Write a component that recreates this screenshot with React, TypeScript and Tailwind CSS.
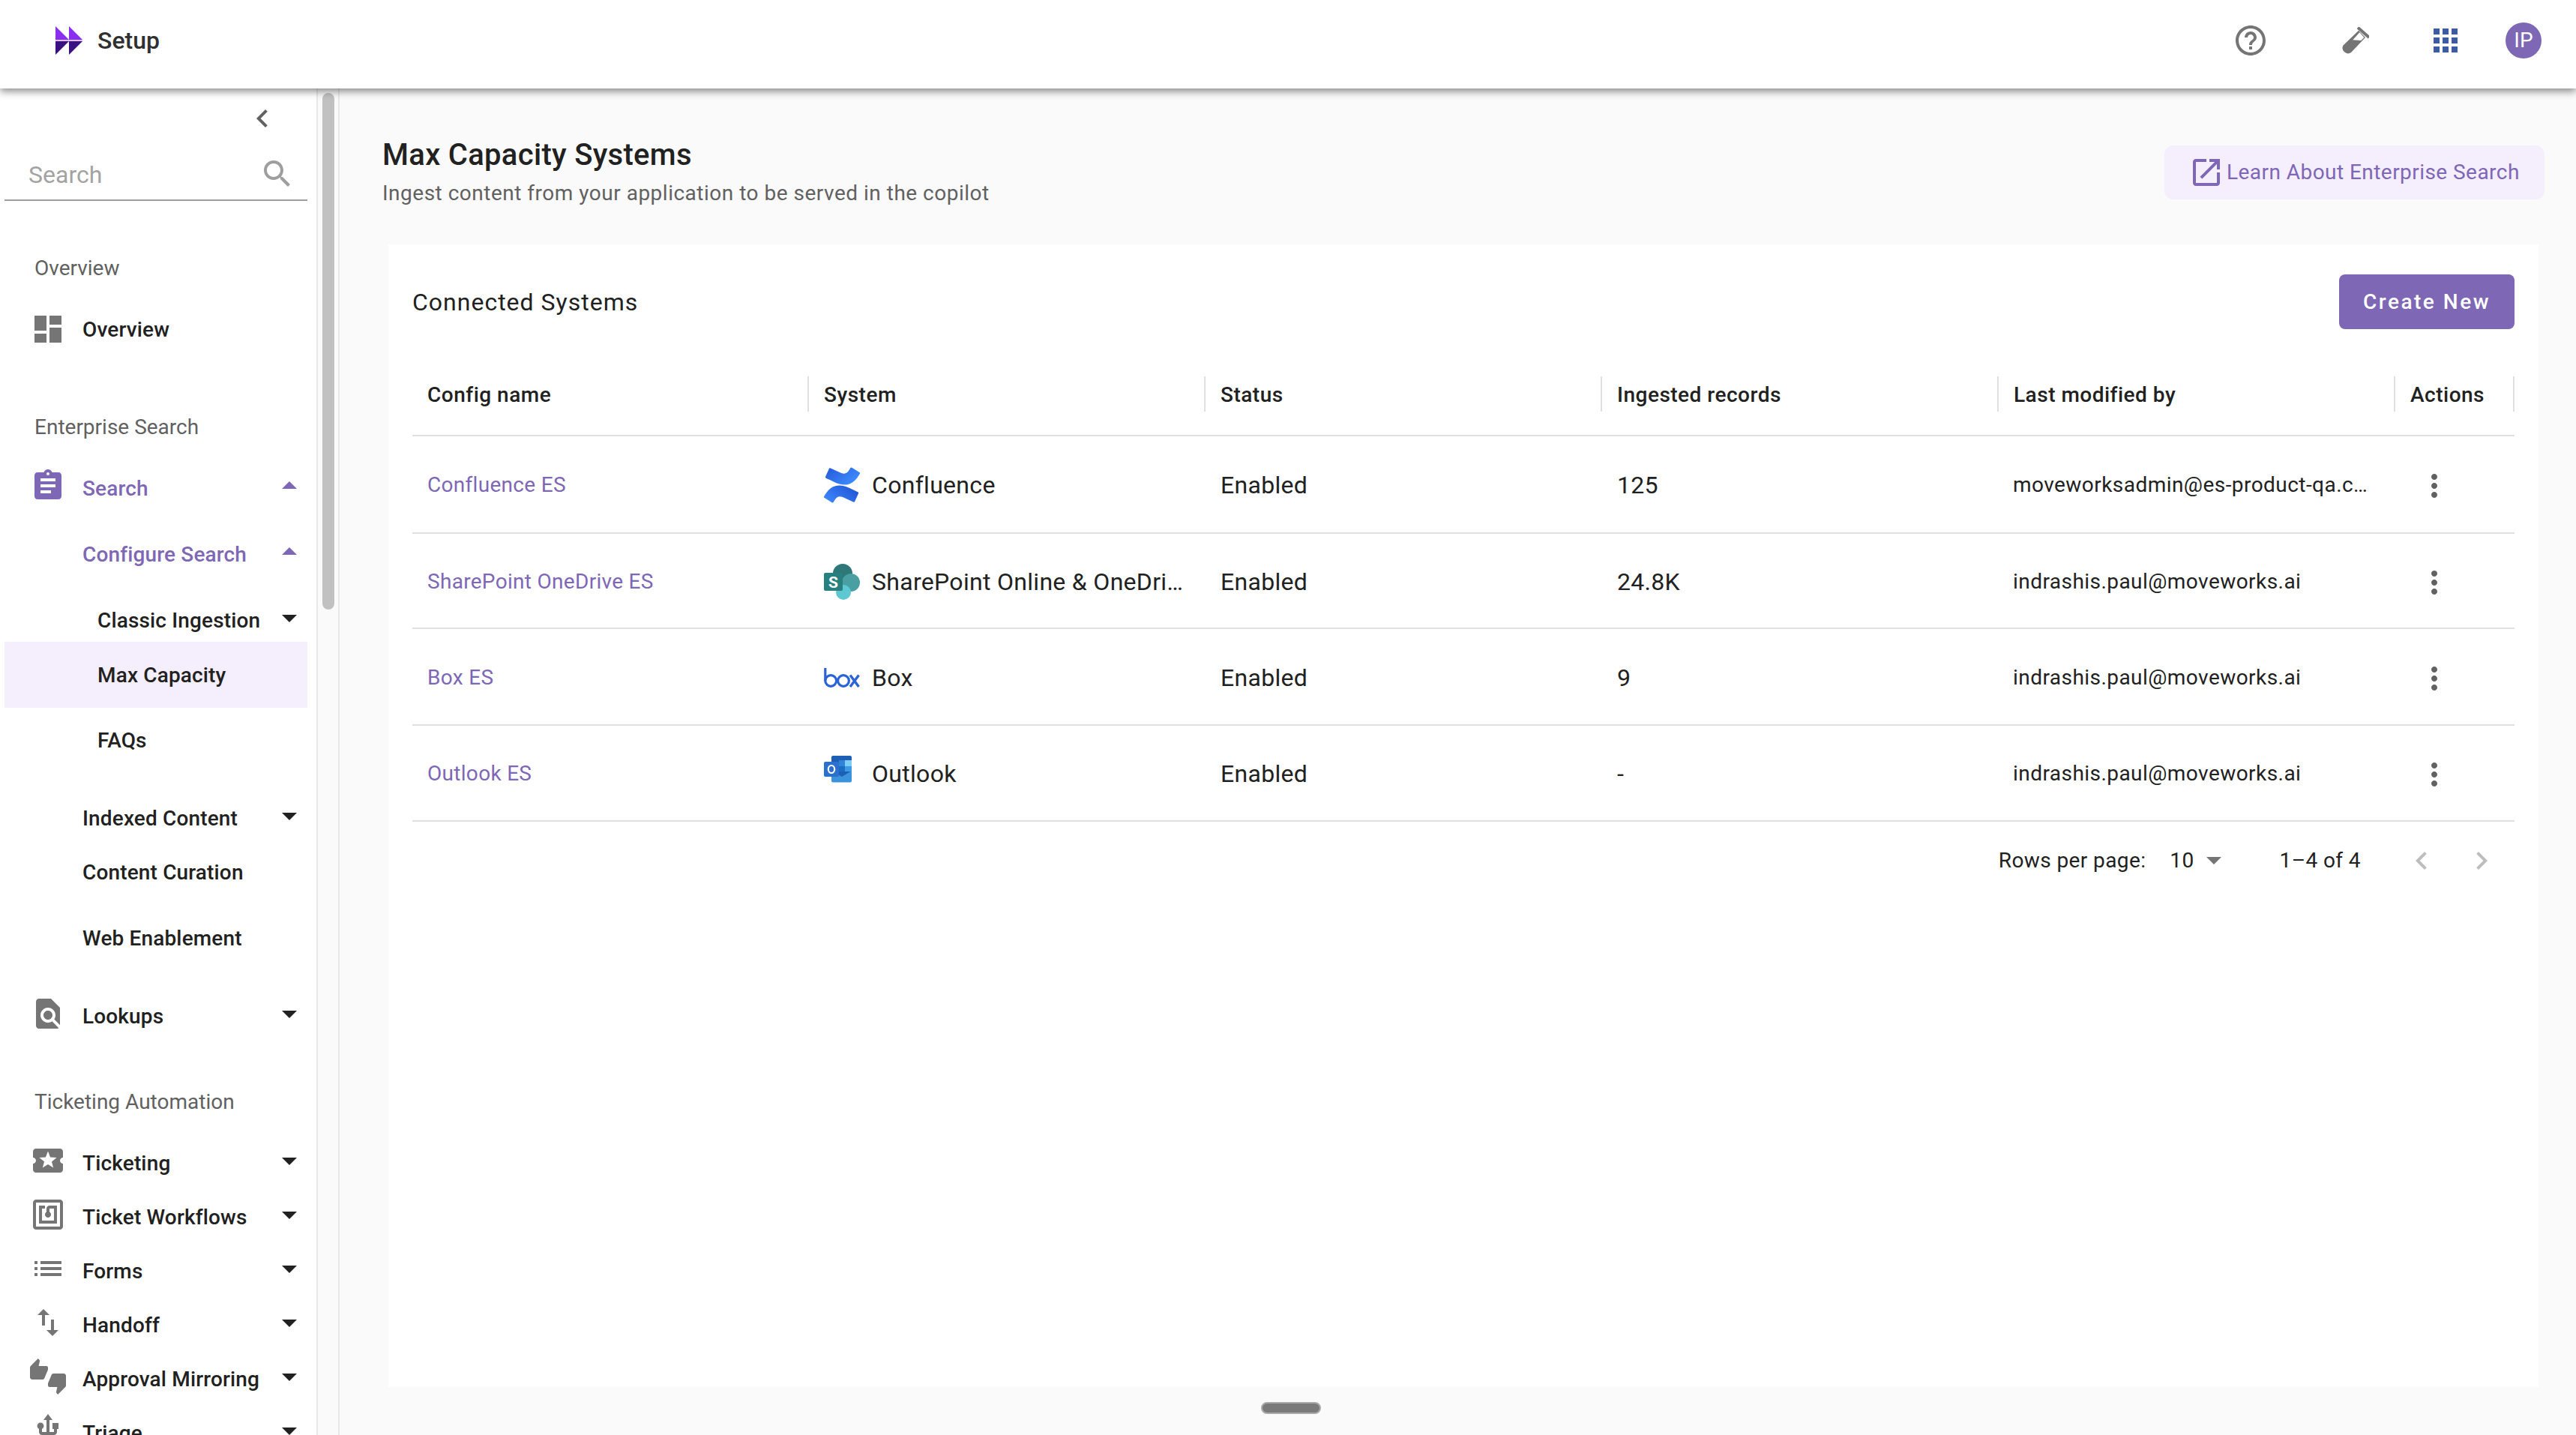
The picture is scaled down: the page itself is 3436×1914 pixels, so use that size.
const PURPLE = "#7e67b5";

const ICONS = {
  dashboard: "M3 13h8V3H3v10zm0 8h8v-6H3v6zm10 0h8V11h-8v10zm0-18v6h8V3h-8z",
  assignment:
    "M19 3h-4.18C14.4 1.84 13.3 1 12 1c-1.3 0-2.4.84-2.82 2H5c-1.1 0-2 .9-2 2v14c0 1.1.9 2 2 2h14c1.1 0 2-.9 2-2V5c0-1.1-.9-2-2-2zm-7 0c.55 0 1 .45 1 1s-.45 1-1 1-1-.45-1-1 .45-1 1-1zm2 14H7v-2h7v2zm3-4H7v-2h10v2zm0-4H7V7h10v2z",
  findInPage:
    "M20 19.59V8l-6-6H6c-1.1 0-1.99.9-1.99 2L4 20c0 1.1.89 2 1.99 2H18c.45 0 .85-.15 1.19-.4l-4.43-4.43c-.8.52-1.74.83-2.76.83-2.76 0-5-2.24-5-5s2.24-5 5-5 5 2.24 5 5c0 1.02-.31 1.96-.83 2.75L20 19.59zM9 13c0 1.66 1.34 3 3 3s3-1.34 3-3-1.34-3-3-3-3 1.34-3 3z",
  ticket:
    "M20 12c0-1.1.9-2 2-2V6c0-1.1-.9-2-2-2H4c-1.1 0-1.99.9-1.99 2v4c1.1 0 1.99.9 1.99 2s-.89 2-2 2v4c0 1.1.9 2 2 2h16c1.1 0 2-.9 2-2v-4c-1.1 0-2-.9-2-2zm-4.42 4.8L12 14.5l-3.58 2.3 1.08-4.12-3.29-2.69 4.24-.25L12 5.8l1.54 3.95 4.24.25-3.29 2.69 1.09 4.11z",
  nfc: "M20 2H4c-1.1 0-2 .9-2 2v16c0 1.1.9 2 2 2h16c1.1 0 2-.9 2-2V4c0-1.1-.9-2-2-2zm0 18H4V4h16v16zM18 6h-5c-1.1 0-2 .9-2 2v2.28c-.6.35-1 .98-1 1.72 0 1.1.9 2 2 2s2-.9 2-2c0-.74-.4-1.38-1-1.72V8h3v8H8V8h2V6H6v12h12V6z",
  list: "M3 13h2v-2H3v2zm0 4h2v-2H3v2zm0-8h2V7H3v2zm4 4h14v-2H7v2zm0 4h14v-2H7v2zM7 7v2h14V7H7z",
  swap: "M16 17.01V10h-2v7.01h-3L15 21l4-3.99h-3zM9 3L5 6.99h3V14h2V6.99h3L9 3z",
  thumbs:
    "M12 6c0-.55-.45-1-1-1H5.82l.66-3.18.02-.23c0-.31-.13-.59-.33-.8L5.38 0 .44 4.94C.17 5.21 0 5.59 0 6v6.5c0 .83.67 1.5 1.5 1.5h6.75c.62 0 1.15-.38 1.38-.91l2.26-5.29c.07-.17.11-.36.11-.55V6zm10.5 4h-6.75c-.62 0-1.15.38-1.38.91l-2.26 5.29c-.07.17-.11.36-.11.55V18c0 .55.45 1 1 1h5.18l-.66 3.18-.02.24c0 .31.13.59.33.8l.79.78 4.94-4.94c.27-.27.44-.65.44-1.06v-6.5c0-.83-.67-1.5-1.5-1.5z",
  usb: "M15 7v4h1v2h-3V5h2l-3-4-3 4h2v8H8v-2.07c.7-.37 1.2-1.08 1.2-1.93 0-1.21-.99-2.2-2.2-2.2-1.21 0-2.2.99-2.2 2.2 0 .85.5 1.56 1.2 1.93V13c0 1.11.89 2 2 2h3v3.05c-.71.37-1.2 1.1-1.2 1.95 0 1.22.99 2.2 2.2 2.2 1.21 0 2.2-.98 2.2-2.2 0-.85-.49-1.58-1.2-1.95V15h3c1.11 0 2-.89 2-2v-2h1V7h-4z",
  help: "M11 18h2v-2h-2v2zm1-16C6.48 2 2 6.48 2 12s4.48 10 10 10 10-4.48 10-10S17.52 2 12 2zm0 18c-4.41 0-8-3.59-8-8s3.59-8 8-8 8 3.59 8 8-3.59 8-8 8zm0-14c-2.21 0-4 1.79-4 4h2c0-1.1.9-2 2-2s2 .9 2 2c0 2-3 1.75-3 5h2c0-2.25 3-2.5 3-5 0-2.21-1.79-4-4-4z",
  apps: "M4 8h4V4H4v4zm6 12h4v-4h-4v4zm-6 0h4v-4H4v4zm0-6h4v-4H4v4zm6 0h4v-4h-4v4zm6-10v4h4V4h-4zm-6 4h4V4h-4v4zm6 6h4v-4h-4v4zm0 6h4v-4h-4v4z",
  openNew:
    "M19 19H5V5h7V3H5c-1.11 0-2 .9-2 2v14c0 1.1.89 2 2 2h14c1.1 0 2-.9 2-2v-7h-2v7zM14 3v2h3.59l-9.83 9.83 1.41 1.41L19 6.41V10h2V3h-7z",
  search:
    "M15.5 14h-.79l-.28-.27C15.41 12.59 16 11.11 16 9.5 16 5.91 13.09 3 9.5 3S3 5.91 3 9.5 5.91 16 9.5 16c1.61 0 3.09-.59 4.23-1.57l.27.28v.79l5 4.99L20.49 19l-4.99-5zm-6 0C7.01 14 5 11.99 5 9.5S7.01 5 9.5 5 14 7.01 14 9.5 11.99 14 9.5 14z",
  chevronLeft: "M15.41 7.41L14 6l-6 6 6 6 1.41-1.41L10.83 12z",
  chevronRight: "M10 6L8.59 7.41 13.17 12l-4.58 4.59L10 18l6-6z",
  caretDown: "M7 10l5 5 5-5z",
  caretUp: "M7 14l5-5 5 5z",
  dots: "M12 8c1.1 0 2-.9 2-2s-.9-2-2-2-2 .9-2 2 .9 2 2 2zm0 2c-1.1 0-2 .9-2 2s.9 2 2 2 2-.9 2-2-.9-2-2-2zm0 6c-1.1 0-2 .9-2 2s.9 2 2 2 2-.9 2-2-.9-2-2-2z",
};

function Icon({ d, color, className = "" }: { d: string; color: string; className?: string }) {
  return (
    <svg viewBox="0 0 24 24" fill={color} className={`w-[48px] h-[48px] shrink-0 ${className}`}>
      <path d={d} />
    </svg>
  );
}

type NavEntry =
  | { kind: "section"; label: string; top: string }
  | {
      kind: "item";
      label: string;
      top: string;
      icon?: string;
      indent?: string;
      height?: string;
      active?: boolean;
      selected?: boolean;
      arrow?: "up" | "down";
      lift?: string;
    };

const NAV: NavEntry[] = [
  { kind: "section", label: "Overview", top: "mt-[69px]" },
  { kind: "item", label: "Overview", top: "mt-[26px]", icon: ICONS.dashboard, lift: "" },
  { kind: "section", label: "Enterprise Search", top: "mt-[74px]" },
  { kind: "item", label: "Search", top: "mt-[26px]", icon: ICONS.assignment, active: true, arrow: "up" },
  { kind: "item", label: "Configure Search", top: "mt-[16px]", indent: "pl-[104px]", active: true, arrow: "up" },
  { kind: "item", label: "Classic Ingestion", top: "mt-[24px]", indent: "pl-[124px]", height: "h-[56px]", arrow: "down" },
  { kind: "item", label: "Max Capacity", top: "mt-[1px]", indent: "pl-[124px]", height: "h-[88px]", selected: true },
  { kind: "item", label: "FAQs", top: "mt-[7px]", indent: "pl-[124px]" },
  { kind: "item", label: "Indexed Content", top: "mt-[32px]", indent: "pl-[104px]", arrow: "down" },
  { kind: "item", label: "Content Curation", top: "mt-0", indent: "pl-[104px]" },
  { kind: "item", label: "Web Enablement", top: "mt-[16px]", indent: "pl-[104px]" },
  { kind: "item", label: "Lookups", top: "mt-[32px]", icon: ICONS.findInPage, arrow: "down" },
  { kind: "section", label: "Ticketing Automation", top: "mt-[58px]" },
  { kind: "item", label: "Ticketing", top: "mt-[26px]", icon: ICONS.ticket, arrow: "down" },
  { kind: "item", label: "Ticket Workflows", top: "mt-0", icon: ICONS.nfc, arrow: "down" },
  { kind: "item", label: "Forms", top: "mt-0", icon: ICONS.list, arrow: "down" },
  { kind: "item", label: "Handoff", top: "mt-0", icon: ICONS.swap, arrow: "down" },
  { kind: "item", label: "Approval Mirroring", top: "mt-0", icon: ICONS.thumbs, arrow: "down" },
  { kind: "item", label: "Triage", top: "mt-0", icon: ICONS.usb, arrow: "down" },
];

function NavItem({ entry }: { entry: Extract<NavEntry, { kind: "item" }> }) {
  const tint = entry.active ? PURPLE : "#212121";
  return (
    <div
      className={`${entry.top} ${entry.height ?? "h-[72px]"} ${entry.selected ? "bg-[#f4eefd]" : ""} ${
        entry.indent ?? "pl-[34px]"
      } shrink-0 ml-[6px] w-[404px] flex items-center text-[28px] leading-[36px] font-medium tracking-[0.15px]`}
      style={{ color: tint }}
    >
      {entry.icon && (
        <Icon
          d={entry.icon}
          color={entry.active ? PURPLE : "#757575"}
          className={`mr-[22px] ${entry.lift ?? "-mt-[6px]"}`}
        />
      )}
      <span className="flex-1 pt-[2px] whitespace-nowrap">{entry.label}</span>
      {entry.arrow && (
        <Icon d={entry.arrow === "up" ? ICONS.caretUp : ICONS.caretDown} color={tint} className="-mt-[6px]" />
      )}
    </div>
  );
}

function Sidebar() {
  return (
    <div className="flex h-full shrink-0">
      <aside className="w-[422px] h-full overflow-hidden bg-white flex flex-col">
        <div className="mt-[8px] h-[64px] shrink-0 flex pl-[326px] items-center">
          <Icon d={ICONS.chevronLeft} color="#616161" />
        </div>
        <div className="ml-[6px] w-[404px] h-[78px] shrink-0 pt-[8px] border-b-2 border-[#9e9e9e] flex items-center pl-[32px]">
          <span className="flex-1 pt-[2px] text-[32px] text-[#a3a3a3]">Search</span>
          <Icon d={ICONS.search} color="#9e9e9e" className="mr-[16px]" />
        </div>
        {NAV.map((entry) =>
          entry.kind === "section" ? (
            <div
              key={entry.label + "-section"}
              className={`${entry.top} h-[40px] shrink-0 pl-[46px] pt-[2px] flex items-center text-[28px] text-[#616161]`}
            >
              {entry.label}
            </div>
          ) : (
            <NavItem key={entry.label} entry={entry} />
          )
        )}
      </aside>
      <div className="w-[31px] h-full bg-[#fafafa] border-x-2 border-[#e8e8e8] pl-[6px] pt-[6px]">
        <div className="w-[16px] h-[689px] rounded-full bg-[#c1c1c1]" />
      </div>
    </div>
  );
}

function LogoMark() {
  return (
    <svg viewBox="0 0 36 38" className="w-[36px] h-[38px]">
      <path d="M0 0L18 18H0z M18 0L36 18H18z" fill="#8a2ff0" />
      <path d="M0 18H36V20H0z" fill="#d9c4fb" />
      <path d="M0 38L18 20H0z M18 38L36 20H18z" fill="#3b1082" />
    </svg>
  );
}

function TestTube() {
  return (
    <svg viewBox="0 0 36 36" className="w-[36px] h-[36px]">
      <path d="M22 4.7L31 14L12 34A7.3 7.3 0 0 1 1.5 24.5z" fill="#757575" />
      <path d="M21 .7L36 14" stroke="#757575" strokeWidth="4" fill="none" />
      <path d="M14.3 17.3L23.3 7.3L29.3 14L25.3 18z" fill="#ffffff" />
    </svg>
  );
}

function ConfluenceLogo() {
  return (
    <svg viewBox="0 0 24 24" className="w-[48px] h-[48px]">
      <defs>
        <linearGradient id="cfA" x1="0" y1="1" x2="1" y2="0.4">
          <stop offset="0" stopColor="#3f8cff" />
          <stop offset="1" stopColor="#2358d8" />
        </linearGradient>
        <linearGradient id="cfB" x1="0" y1="0" x2="1" y2="0.6">
          <stop offset="0" stopColor="#2358d8" />
          <stop offset="1" stopColor="#3f8cff" />
        </linearGradient>
      </defs>
      <path
        fill="url(#cfA)"
        d="M.87 18.257c-.248.382-.53.875-.763 1.245a.764.764 0 0 0 .255 1.04l4.965 3.054a.764.764 0 0 0 1.058-.26c.199-.332.454-.763.733-1.221 1.967-3.247 3.945-2.853 7.508-1.146l4.957 2.337a.764.764 0 0 0 1.028-.382l2.364-5.346a.764.764 0 0 0-.382-1 599.851 599.851 0 0 1-4.965-2.361C10.911 10.97 5.224 11.185.87 18.257z"
      />
      <path
        fill="url(#cfB)"
        d="M23.131 5.743c.249-.405.531-.875.764-1.25a.764.764 0 0 0-.256-1.034L18.675.404a.764.764 0 0 0-1.058.26c-.195.335-.451.763-.734 1.225-1.966 3.246-3.945 2.85-7.508 1.146L4.437.694a.764.764 0 0 0-1.027.382L1.046 6.422a.764.764 0 0 0 .382 1c1.039.49 3.105 1.467 4.965 2.361 6.698 3.246 12.384 3.029 16.738-4.04z"
      />
    </svg>
  );
}

function SharePointLogo() {
  return (
    <svg viewBox="0 0 48 48" className="w-[48px] h-[48px]">
      <circle cx="25" cy="13" r="13" fill="#2f7878" />
      <circle cx="36" cy="25" r="12" fill="#4a9fa3" />
      <circle cx="26" cy="38" r="10" fill="#5ec8d2" />
      <rect x="0" y="12" width="25" height="24" rx="2" fill="#27807f" />
      <text x="12.5" y="31.5" textAnchor="middle" fontSize="21" fontWeight="700" fill="#ffffff" fontFamily="Roboto, sans-serif">
        S
      </text>
    </svg>
  );
}

function BoxLogo() {
  return (
    <svg viewBox="0 0 48 26" className="w-[48px] h-[26px]" fill="none" stroke="#2a62d8" strokeWidth="3.2">
      <path d="M1.8 0V17" />
      <circle cx="9.2" cy="17" r="7.4" />
      <circle cx="26" cy="17" r="7.4" />
      <path d="M35 9.5L46.5 25M46.5 9.5L35 25" strokeWidth="3.4" />
    </svg>
  );
}

function OutlookLogo() {
  return (
    <svg viewBox="0 0 38 36" className="w-[38px] h-[36px]">
      <rect x="10" y="0" width="27" height="30" rx="2" fill="#1c5fb5" />
      <rect x="20" y="6" width="8" height="8" fill="#2f83d8" />
      <rect x="28" y="6" width="9" height="8" fill="#7dcdf5" />
      <rect x="20" y="14" width="8" height="7" fill="#1d6cc4" />
      <rect x="28" y="14" width="9" height="7" fill="#3d9be6" />
      <path d="M10 20L24 28L37 20V33.5a2 2 0 0 1-2 2H12a2 2 0 0 1-2-2z" fill="#3c93dd" />
      <rect x="0" y="8" width="20" height="20" rx="2" fill="#2a70cc" />
      <ellipse cx="10" cy="18" rx="4.2" ry="5" fill="none" stroke="#ffffff" strokeWidth="2.2" />
    </svg>
  );
}

const COLUMNS = ["Config name", "System", "Status", "Ingested records", "Last modified by", "Actions"];

const ROWS = [
  {
    name: "Confluence ES",
    system: "Confluence",
    logo: <ConfluenceLogo />,
    records: "125",
    email: "moveworksadmin@es-product-qa.com",
    height: "h-[130px]",
  },
  {
    name: "SharePoint OneDrive ES",
    system: "SharePoint Online & OneDrive",
    logo: <SharePointLogo />,
    records: "24.8K",
    email: "indrashis.paul@moveworks.ai",
    height: "h-[127px]",
  },
  {
    name: "Box ES",
    system: "Box",
    logo: <BoxLogo />,
    records: "9",
    email: "indrashis.paul@moveworks.ai",
    height: "h-[129px]",
  },
  {
    name: "Outlook ES",
    system: "Outlook",
    logo: (
      <span className="-mt-[12px]">
        <OutlookLogo />
      </span>
    ),
    records: "-",
    email: "indrashis.paul@moveworks.ai",
    height: "h-[128px]",
  },
];

const GRID = "grid grid-cols-[529px_529px_529px_529px_529px_159px]";

function SystemsTable() {
  return (
    <div className="mt-[32px]">
      <div className={`${GRID} h-[111px] border-b-2 border-[#e0e0e0]`}>
        {COLUMNS.map((col) => (
          <div key={col} className="flex items-center">
            <span className="flex-1 pl-[20px] pt-[2px] text-[28px] font-medium tracking-[0.5px] text-[#212121]">{col}</span>
            <span className="w-[2px] h-[47px] bg-[#e0e0e0]" />
          </div>
        ))}
      </div>
      {ROWS.map((row) => (
        <div key={row.name} className={`${GRID} ${row.height} pt-[2px] border-b-2 border-[#e0e0e0] items-center text-[#212121]`}>
          <a className="pl-[20px] text-[28px] tracking-[0.3px] text-[#7e67b5]">{row.name}</a>
          <div className="pl-[20px] flex items-center">
            <span className="w-[48px] flex justify-start shrink-0">{row.logo}</span>
            <span className="ml-[16px] w-[424px] truncate text-[32px] tracking-[0.3px]">{row.system}</span>
          </div>
          <span className="pl-[20px] text-[32px] tracking-[0.3px]">Enabled</span>
          <span className="pl-[20px] text-[32px] tracking-[0.3px]">{row.records}</span>
          <span className="pl-[19px] max-w-[493px] truncate text-[28px] tracking-[0.45px]">{row.email}</span>
          <div className="pl-[28px] pt-[2px]">
            <Icon d={ICONS.dots} color="#616161" />
          </div>
        </div>
      ))}
      <div className="h-[102px] pt-[2px] flex items-center justify-end pr-[20px] text-[28px] tracking-[0.4px] text-[#212121]">
        <span>Rows per page:</span>
        <span className="ml-[32px]">10</span>
        <Icon d={ICONS.caretDown} color="#757575" className="ml-[2px] -mt-[2px]" />
        <span className="ml-[64px]">1–4 of 4</span>
        <Icon d={ICONS.chevronLeft} color="#bdbdbd" className="ml-[57px]" />
        <Icon d={ICONS.chevronRight} color="#bdbdbd" className="ml-[32px]" />
      </div>
    </div>
  );
}

function App() {
  return (
    <div className="relative h-[1914px] w-[3436px] overflow-hidden flex flex-col bg-[#fafafa] [font-family:Roboto,sans-serif]">
      <header className="relative z-10 h-[118px] shrink-0 bg-white shadow-[0_4px_10px_rgba(0,0,0,0.45)] flex items-center pb-[10px] pl-[74px] pr-[46px]">
        <LogoMark />
        <span className="ml-[20px] flex-1 text-[32px] font-medium text-[#303030]">Setup</span>
        <Icon d={ICONS.help} color="#757575" />
        <span className="ml-[98px] w-[36px] h-[36px]">
          <TestTube />
        </span>
        <Icon d={ICONS.apps} color="#3c5ba0" className="ml-[78px]" />
        <div className="ml-[56px] w-[48px] h-[48px] rounded-full bg-[#7e67b5] text-white text-[28px] flex items-center justify-center">
          IP
        </div>
      </header>

      <div className="flex-1 min-h-0 flex">
        <Sidebar />
        <main className="flex-1 min-w-0 flex flex-col pl-[57px] pr-[42px] pb-[64px]">
          <div className="h-[208px] shrink-0 flex justify-between items-start">
            <div className="pt-[60px]">
              <h1 className="h-[54px] pt-[4px] flex items-center text-[40px] font-medium tracking-[0.3px] text-[#212121]">
                Max Capacity Systems
              </h1>
              <p className="mt-[6px] h-[40px] flex items-center text-[28px] tracking-[0.5px] text-[#616161]">
                Ingest content from your application to be served in the copilot
              </p>
            </div>
            <button className="mt-[76px] w-[507px] h-[72px] rounded-[12px] bg-[#f4eefd] flex items-center pl-[32px] text-[28px] tracking-[0.45px] text-[#7e67b5]">
              <Icon d={ICONS.openNew} color={PURPLE} />
              <span className="ml-[3px] whitespace-nowrap">Learn About Enterprise Search</span>
            </button>
          </div>

          <section className="flex-1 min-h-0 ml-[8px] mr-[8px] bg-white px-[32px] pt-[40px]">
            <div className="flex items-center justify-between h-[73px]">
              <h2 className="text-[32px] tracking-[1px] text-[#212121]">Connected Systems</h2>
              <button className="w-[234px] h-[73px] rounded-[8px] bg-[#7e67b5] text-white text-[28px] font-medium tracking-[2.5px]">
                Create New
              </button>
            </div>
            <SystemsTable />
          </section>
        </main>
      </div>

      {/* Drag handle floating over the bottom edge */}
      <div className="absolute left-[1682px] top-[1870px] w-[80px] h-[16px] rounded-full bg-[#7a7a7a] border-2 border-[#aaaaaa]" />
    </div>
  );
}

export default App;
